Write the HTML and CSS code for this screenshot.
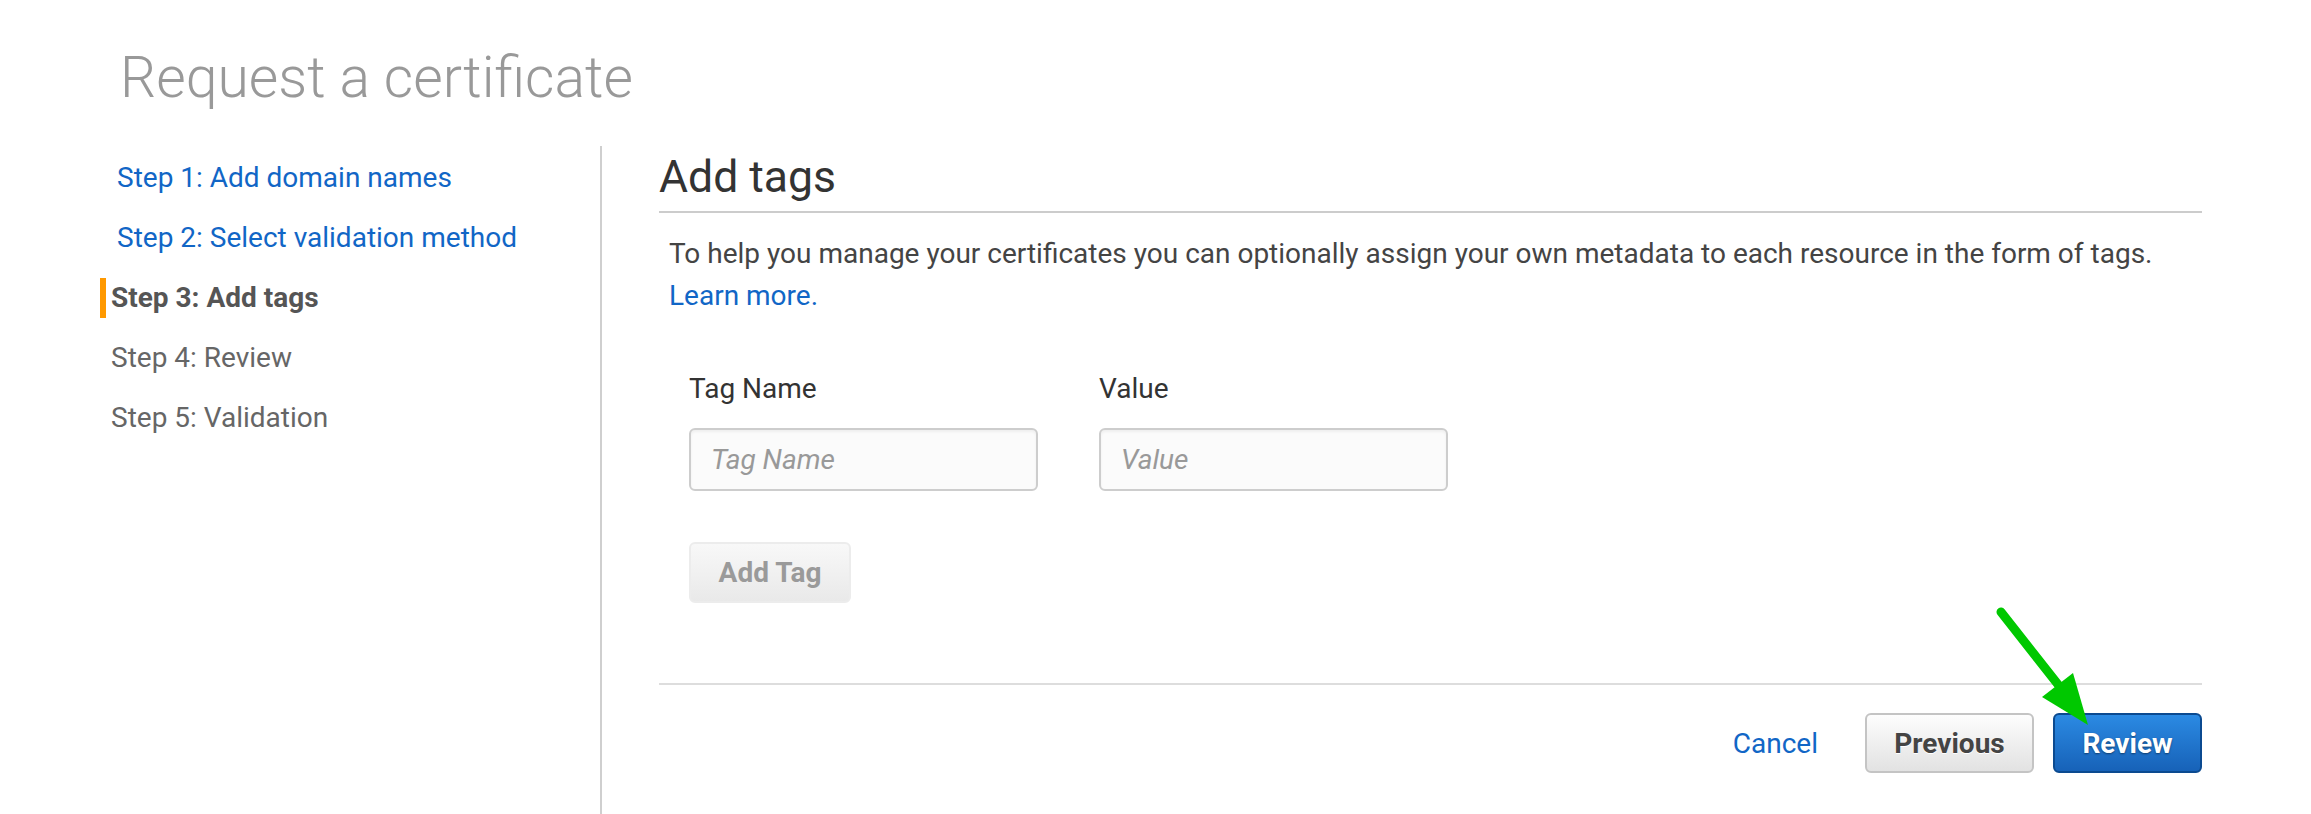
FILE: index.html
```html
<!DOCTYPE html>
<html lang="en">
<head>
<meta charset="utf-8">
<title>Request a certificate</title>
<link rel="stylesheet" href="styles.css">
</head>
<body>
<div class="page">
  <h1 class="title">Request a certificate</h1>
  <div class="layout">
    <nav class="nav">
      <ul class="nav-list">
        <li class="nav-item"><a href="#">Step 1: Add domain names</a></li>
        <li class="nav-item"><a href="#">Step 2: Select validation method</a></li>
        <li class="nav-item active">Step 3: Add tags</li>
        <li class="nav-item">Step 4: Review</li>
        <li class="nav-item">Step 5: Validation</li>
      </ul>
    </nav>
    <main class="main">
      <h2 class="heading">Add tags</h2>
      <p class="intro">To help you manage your certificates you can optionally assign your own metadata to each resource in the form of tags.<br><a href="#">Learn more.</a></p>
      <div class="tag-form">
        <div class="fields">
          <div class="field">
            <label for="tagname">Tag Name</label>
            <input id="tagname" type="text" placeholder="Tag Name">
          </div>
          <div class="field">
            <label for="tagvalue">Value</label>
            <input id="tagvalue" type="text" placeholder="Value">
          </div>
        </div>
        <button class="btn btn-disabled" type="button">Add Tag</button>
      </div>
      <div class="footer-rule"></div>
      <div class="actions">
        <a class="cancel" href="#">Cancel</a>
        <button class="btn btn-default" type="button">Previous</button>
        <button class="btn btn-primary" type="button">Review</button>
      </div>
    </main>
  </div>
  <svg class="arrow" width="120" height="140" viewBox="0 0 120 140" aria-hidden="true">
    <line x1="21" y1="17" x2="80" y2="92" stroke="#00c800" stroke-width="9" stroke-linecap="round"/>
    <polygon points="62,102 93,78 108,130" fill="#00c800"/>
  </svg>
</div>
</body>
</html>
```

FILE: styles.css
```css
* { box-sizing: border-box; }
html, body { margin: 0; padding: 0; }
body {
  width: 2311px;
  height: 814px;
  overflow: hidden;
  background: #fff;
  font-family: Roboto, "Liberation Sans", Arial, sans-serif;
}
.page {
  position: relative;
  height: 814px;
  padding: 44px 109px 0 100px;
  display: flex;
  flex-direction: column;
}
.title {
  margin: 0 0 34px 20px;
  font-size: 57px;
  font-weight: 300;
  line-height: 68px;
  color: #999;
}
.layout {
  flex: 1;
  display: flex;
}
.nav {
  width: 502px;
  flex-shrink: 0;
  border-right: 2px solid #cfcfcf;
  padding-top: 12px;
}
.nav-list {
  list-style: none;
  margin: 0;
  padding: 0;
  display: flex;
  flex-direction: column;
  gap: 20px;
}
.nav-item {
  font-size: 28px;
  line-height: 40px;
  color: #666;
  padding-left: 11px;
}
.nav-item a {
  color: #1166c6;
  text-decoration: none;
  padding-left: 6px;
}
.nav-item.active {
  border-left: 6px solid #ff9900;
  padding-left: 5px;
  font-weight: 700;
  color: #555;
}
.main {
  flex: 1;
  padding: 5px 0 0 57px;
  display: flex;
  flex-direction: column;
}
.heading {
  margin: 0;
  font-size: 44.5px;
  font-weight: 400;
  line-height: 52px;
  color: #333;
  padding-bottom: 8px;
  border-bottom: 2px solid #ccc;
}
.intro {
  margin: 20px 0 0 10px;
  font-size: 28px;
  line-height: 42px;
  color: #444;
}
.intro a, .cancel {
  color: #1166c6;
  text-decoration: none;
}
.tag-form {
  margin: 53px 0 0 30px;
  display: flex;
  flex-direction: column;
  align-items: flex-start;
}
.fields {
  display: flex;
  gap: 61px;
}
.field {
  width: 349px;
  display: flex;
  flex-direction: column;
  gap: 20px;
}
.field label {
  font-size: 28px;
  line-height: 38px;
  color: #333;
}
.field input {
  height: 63px;
  width: 100%;
  border: 2px solid #cdcdcd;
  border-radius: 6px;
  background: #fbfbfb;
  padding: 0 20px;
  font-family: Roboto, "Liberation Sans", Arial, sans-serif;
  font-size: 28px;
  color: #444;
  box-shadow: inset 0 2px 3px rgba(0, 0, 0, 0.05);
  outline: none;
}
.field input::placeholder {
  color: #999;
  font-style: italic;
}
.btn {
  font-family: Roboto, "Liberation Sans", Arial, sans-serif;
  font-size: 28px;
  font-weight: 700;
  border-radius: 6px;
  padding: 0;
  cursor: pointer;
}
.btn-disabled {
  margin-top: 51px;
  width: 162px;
  height: 61px;
  color: #9a9a9a;
  background: linear-gradient(#f8f8f8, #e9e9e9);
  border: 2px solid #ececec;
}
.footer-rule {
  margin-top: 80px;
  border-top: 2px solid #ddd;
}
.actions {
  margin-top: 28px;
  display: flex;
  justify-content: flex-end;
  align-items: center;
}
.cancel {
  font-size: 28px;
  margin-right: 47px;
}
.btn-default {
  width: 169px;
  height: 60px;
  color: #444;
  background: linear-gradient(#fdfdfd, #e2e2e2);
  border: 2px solid #c4c4c4;
  text-shadow: 0 1px 0 #fff;
}
.btn-primary {
  margin-left: 19px;
  width: 149px;
  height: 60px;
  color: #fff;
  background: linear-gradient(#2b8ae3, #1762b8);
  border: 2px solid #0b4a90;
  text-shadow: 0 1px 2px rgba(0, 0, 0, 0.45);
}
.arrow {
  position: absolute;
  left: 1980px;
  top: 595px;
}
```
